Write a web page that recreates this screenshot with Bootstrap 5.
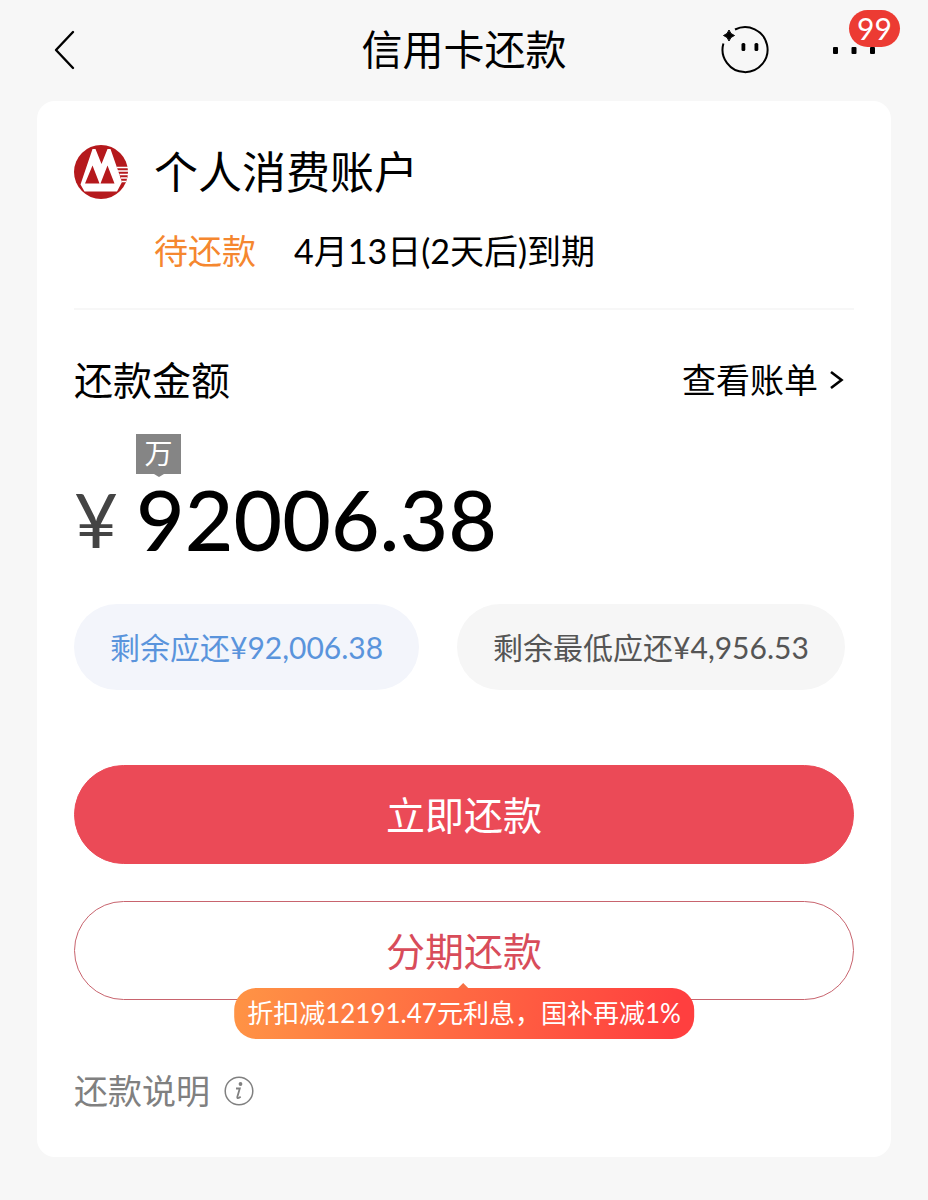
<!DOCTYPE html>
<html lang="zh-CN">
<head>
<meta charset="utf-8">
<meta name="viewport" content="width=device-width, initial-scale=1">
<title>信用卡还款</title>
<link href="https://cdn.jsdelivr.net/npm/bootstrap@5.3.0/dist/css/bootstrap.min.css" rel="stylesheet">
<style>
  body { background: #f7f7f7; color: #000; font-family: Lato, "Noto Sans CJK SC", sans-serif; font-size: 34px; line-height: 40px; }
  a, button { color: inherit; text-decoration: none; }
  svg { display: block; flex: none; }
  .topbar { display: grid; grid-template-columns: 1fr auto 1fr; align-items: center; height: 101px; padding: 0 52px 2px; }
  .topbar h1 { font-size: 41px; line-height: 52px; font-weight: 400; }
  .plain { border: 0; background: none; padding: 0; }
  .more { position: relative; }
  .count { position: absolute; left: 17px; top: -35px; width: 51px; height: 37px; border-radius: 19px; background: #ec3b33; color: #fff; font-size: 30px; line-height: 37px; text-align: center; }
  .sheet { margin: 0 37px 43px; padding: 44px 37px 46px; border: 0; border-radius: 18px; }
  .account { display: grid; grid-template-columns: 54px 1fr; column-gap: 26px; row-gap: 32px; align-items: center; }
  .account h2 { font-size: 44px; line-height: 52px; font-weight: 400; }
  .due { grid-column: 2; column-gap: 38px; }
  .pending { color: #f5872f; }
  .rule { margin: 37px 0 50px; border-top: 2px solid #f7f7f7; opacity: 1; }
  .lead-label { font-size: 39px; line-height: 40px; font-weight: 400; }
  .amount { display: grid; grid-template-columns: 62px 1fr; margin: 34px 0 40px; }
  .unit { grid-column: 2; justify-self: start; position: relative; width: 45px; height: 40px; background: #858585; color: #fff; font-size: 28px; line-height: 38px; text-align: center; }
  .unit::after { content: ""; position: absolute; left: 18px; top: 100%; border: 5px solid transparent; border-top: 3px solid #858585; border-bottom: 0; }
  .yen { font-size: 76px; line-height: 90px; color: #444; }
  .figure-total { font-size: 84px; line-height: 90px; font-weight: 500; }
  .chips { gap: 38px; margin-bottom: 75px; }
  .chip { border: 0; height: 86px; padding: 0 36px; border-radius: 43px; font-size: 30px; white-space: nowrap; background: #f6f6f6; color: #555; }
  .chip-on { background: #f3f5fb; color: #5a94dc; }
  .pay { width: 100%; height: 99px; border-radius: 50px; font-size: 39px; border: 1px solid #eb4a57; background: #eb4a57; color: #fff; padding: 0; }
  .pay-split { border-color: #c8646e; background: #fff; color: #d84c5a; }
  .tip { position: absolute; left: 50%; top: 87px; transform: translateX(-50%); height: 51px; padding: 0 13px; border-radius: 22px; background: linear-gradient(100deg, #ff9445, #ff3f3f 95%); color: #fff; font-size: 26px; line-height: 51px; white-space: nowrap; }
  .tip::before { content: ""; position: absolute; left: 50%; margin-left: -6px; bottom: 100%; border: 5px solid transparent; border-bottom-color: #f77045; border-top: 0; }
  .note { color: #808080; gap: 14px; margin-top: 71px; }
</style>
</head>
<body>
<header class="topbar">
  <a href="#" aria-label="返回"><svg width="24" height="40" viewBox="0 0 24 40" fill="none" stroke="#000" stroke-width="2.4" stroke-linecap="round" stroke-linejoin="round"><path d="M21 2 4 20l17 18"/></svg></a>
  <h1 class="m-0">信用卡还款</h1>
  <div class="d-flex justify-content-end align-items-center" style="gap:62px">
    <button class="plain" aria-label="客服"><svg width="50" height="50" viewBox="0 0 50 50"><path d="M15 4.500A22.500 22.500 0 1 1 3.400 18.500" fill="none" stroke="#000" stroke-width="2"/><path d="M9 5q1.200 4.300 5.500 5.500Q10.200 11.700 9 16 7.800 11.700 3.500 10.500 7.800 9.300 9 5Z" stroke="#000"/><rect x="21.500" y="18" width="3.800" height="8" rx="1.500"/><rect x="34.500" y="18" width="3.800" height="8" rx="1.500"/></svg></button>
    <button class="plain more" aria-label="更多"><svg width="44" height="9" viewBox="0 0 44 9"><rect x="1" y="2" width="5" height="7" rx="1"/><rect x="19.500" y="2" width="5" height="7" rx="1"/><rect x="38" y="2" width="5" height="7" rx="1"/></svg><span class="count">99</span></button>
  </div>
</header>
<main class="card sheet">
  <section class="account">
    <svg width="54" height="54" viewBox="0 0 54 54"><circle cx="27" cy="27" r="27" fill="#b5191c"/><path d="M18.500 4h3L27.500 19 33.500 4h3L48 37l-5 9.500H10.500L6.500 39.500Z" fill="#fff"/><path d="M11 38.500 18.500 20.500 25.500 38.500ZM26.500 38.500 33.500 20.500 40.500 38.500Z" fill="#b5191c"/><path d="M43 22.500h11M44 26h10M45.500 29.500h8.500M47 33h6M48 36.500h4" stroke="#fff" stroke-width="1.500"/></svg>
    <h2 class="m-0">个人消费账户</h2>
    <div class="due d-flex"><span class="pending">待还款</span><span>4月13日(2天后)到期</span></div>
  </section>
  <hr class="rule">
  <div class="d-flex justify-content-between align-items-center">
    <h3 class="lead-label m-0">还款金额</h3>
    <a href="#" class="d-flex align-items-center gap-2 pe-2">查看账单 <svg width="20" height="22" viewBox="0 0 20 22" fill="none" stroke="#000" stroke-width="2.600"><path d="m5 3 10.500 8L5 19"/></svg></a>
  </div>
  <div class="amount">
    <span class="unit">万</span>
    <span class="yen">¥</span><span class="figure-total">92006.38</span>
  </div>
  <div class="chips d-flex">
    <button class="chip chip-on">剩余应还¥92,006.38</button>
    <button class="chip">剩余最低应还¥4,956.53</button>
  </div>
  <button class="pay">立即还款</button>
  <div class="position-relative" style="margin-top:37px">
    <button class="pay pay-split d-block">分期还款</button>
    <span class="tip">折扣减12191.47元利息，国补再减1%</span>
  </div>
  <a href="#" class="note d-flex align-items-center">还款说明
    <svg width="30" height="30" viewBox="0 0 30 30" fill="none" stroke="#808080"><circle cx="15" cy="15" r="13.800" stroke-width="1.500"/><path d="M12 12.500h3.800L13.300 21q-.3 1.500 1.400 1l2-1.300" stroke-width="1.800"/><circle cx="16.500" cy="8" r="1.900" fill="#808080" stroke="none"/></svg>
  </a>
</main>
<script src="https://cdn.jsdelivr.net/npm/bootstrap@5.3.0/dist/js/bootstrap.bundle.min.js"></script>
</body>
</html>
